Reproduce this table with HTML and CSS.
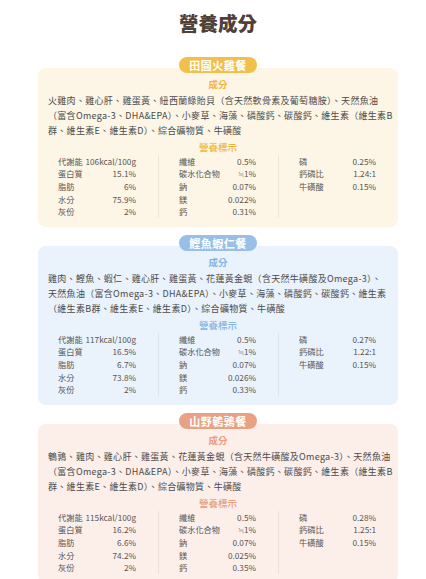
FILE: index.html
```html
<!DOCTYPE html>
<html lang="zh-Hant">
<head>
  <meta charset="UTF-8">
  <meta name="viewport" content="width=device-width, initial-scale=1.0">
  <title>營養成分</title>
  <link rel="stylesheet" href="styles.css">
</head>
<body>
  <main class="page">
    <h1 class="title">營養成分</h1>

    <section class="recipe turkey">
      <div class="badge">田園火雞餐</div>
      <div class="card">
        <h3 class="card-head">成分</h3>
        <p class="ingredients">火雞肉、雞心肝、雞蛋黃、紐西蘭綠貽貝（含天然軟骨素及葡萄糖胺）、天然魚油<br>（富含Omega-3、DHA&amp;EPA）、小麥草、海藻、磷酸鈣、碳酸鈣、維生素（維生素B<br>群、維生素E、維生素D）、綜合礦物質、牛磺酸</p>
        <h3 class="card-head sub">營養標示</h3>
        <div class="facts">
          <div class="facts-col">
            <div class="fact"><span>代謝能</span><span>106kcal/100g</span></div>
            <div class="fact"><span>蛋白質</span><span>15.1%</span></div>
            <div class="fact"><span>脂肪</span><span>6%</span></div>
            <div class="fact"><span>水分</span><span>75.9%</span></div>
            <div class="fact"><span>灰份</span><span>2%</span></div>
          </div>
          <div class="facts-col">
            <div class="fact"><span>纖維</span><span>0.5%</span></div>
            <div class="fact"><span>碳水化合物</span><span>≒1%</span></div>
            <div class="fact"><span>鈉</span><span>0.07%</span></div>
            <div class="fact"><span>鎂</span><span>0.022%</span></div>
            <div class="fact"><span>鈣</span><span>0.31%</span></div>
          </div>
          <div class="facts-col">
            <div class="fact"><span>磷</span><span>0.25%</span></div>
            <div class="fact"><span>鈣磷比</span><span>1.24:1</span></div>
            <div class="fact"><span>牛磺酸</span><span>0.15%</span></div>
          </div>
        </div>
      </div>
    </section>

    <section class="recipe bonito">
      <div class="badge">鰹魚蝦仁餐</div>
      <div class="card">
        <h3 class="card-head">成分</h3>
        <p class="ingredients">雞肉、鰹魚、蝦仁、雞心肝、雞蛋黃、花蓮黃金蜆（含天然牛磺酸及Omega-3）、<br>天然魚油（富含Omega-3、DHA&amp;EPA）、小麥草、海藻、磷酸鈣、碳酸鈣、維生素<br>（維生素B群、維生素E、維生素D）、綜合礦物質、牛磺酸</p>
        <h3 class="card-head sub">營養標示</h3>
        <div class="facts">
          <div class="facts-col">
            <div class="fact"><span>代謝能</span><span>117kcal/100g</span></div>
            <div class="fact"><span>蛋白質</span><span>16.5%</span></div>
            <div class="fact"><span>脂肪</span><span>6.7%</span></div>
            <div class="fact"><span>水分</span><span>73.8%</span></div>
            <div class="fact"><span>灰份</span><span>2%</span></div>
          </div>
          <div class="facts-col">
            <div class="fact"><span>纖維</span><span>0.5%</span></div>
            <div class="fact"><span>碳水化合物</span><span>≒1%</span></div>
            <div class="fact"><span>鈉</span><span>0.07%</span></div>
            <div class="fact"><span>鎂</span><span>0.026%</span></div>
            <div class="fact"><span>鈣</span><span>0.33%</span></div>
          </div>
          <div class="facts-col">
            <div class="fact"><span>磷</span><span>0.27%</span></div>
            <div class="fact"><span>鈣磷比</span><span>1.22:1</span></div>
            <div class="fact"><span>牛磺酸</span><span>0.15%</span></div>
          </div>
        </div>
      </div>
    </section>

    <section class="recipe quail">
      <div class="badge">山野鵪鶉餐</div>
      <div class="card">
        <h3 class="card-head">成分</h3>
        <p class="ingredients">鵪鶉、雞肉、雞心肝、雞蛋黃、花蓮黃金蜆（含天然牛磺酸及Omega-3）、天然魚油<br>（富含Omega-3、DHA&amp;EPA）、小麥草、海藻、磷酸鈣、碳酸鈣、維生素（維生素B<br>群、維生素E、維生素D）、綜合礦物質、牛磺酸</p>
        <h3 class="card-head sub">營養標示</h3>
        <div class="facts">
          <div class="facts-col">
            <div class="fact"><span>代謝能</span><span>115kcal/100g</span></div>
            <div class="fact"><span>蛋白質</span><span>16.2%</span></div>
            <div class="fact"><span>脂肪</span><span>6.6%</span></div>
            <div class="fact"><span>水分</span><span>74.2%</span></div>
            <div class="fact"><span>灰份</span><span>2%</span></div>
          </div>
          <div class="facts-col">
            <div class="fact"><span>纖維</span><span>0.5%</span></div>
            <div class="fact"><span>碳水化合物</span><span>≒1%</span></div>
            <div class="fact"><span>鈉</span><span>0.07%</span></div>
            <div class="fact"><span>鎂</span><span>0.025%</span></div>
            <div class="fact"><span>鈣</span><span>0.35%</span></div>
          </div>
          <div class="facts-col">
            <div class="fact"><span>磷</span><span>0.28%</span></div>
            <div class="fact"><span>鈣磷比</span><span>1.25:1</span></div>
            <div class="fact"><span>牛磺酸</span><span>0.15%</span></div>
          </div>
        </div>
      </div>
    </section>
  </main>
</body>
</html>
```

FILE: styles.css
```css
* {
  box-sizing: border-box;
}

body {
  margin: 0;
  background: #fff;
  font-family: "Noto Sans CJK TC", "Noto Sans", sans-serif;
  color: #4a4a4a;
}

.page {
  padding: 10px 28px 0 38px;
}

.title {
  margin: 0 0 21px;
  font-size: 19.5px;
  line-height: 26px;
  font-weight: 900;
  text-align: center;
  color: #4f4038;
}

.recipe {
  display: flex;
  flex-direction: column;
  align-items: center;
  margin-bottom: 8px;
}

.badge {
  position: relative;
  z-index: 1;
  height: 16px;
  line-height: 16px;
  padding: 0 10px;
  border-radius: 8px;
  color: #fff;
  font-size: 11px;
  font-weight: 700;
  letter-spacing: 0.5px;
}

.card {
  align-self: stretch;
  margin-top: -5px;
  padding: 10px 0 9px;
  border-radius: 8px;
}

.card-head {
  margin: 0;
  font-size: 9.5px;
  line-height: 12px;
  font-weight: 700;
  text-align: center;
}

.card-head.sub {
  margin-top: 3px;
  line-height: 13px;
  font-weight: 500;
}

.ingredients {
  margin: 2.5px 0 0;
  padding: 0 0 0 10px;
  font-size: 9px;
  line-height: 15px;
  letter-spacing: 0.3px;
  white-space: nowrap;
  color: #4a4a4a;
}

.facts {
  display: grid;
  grid-template-columns: repeat(3, 1fr);
  margin-top: 1px;
}

.facts-col {
  padding: 0 22px 0 20px;
}

.facts-col + .facts-col {
  border-left: 1px solid rgba(0, 0, 0, 0.06);
}

.fact {
  display: flex;
  justify-content: space-between;
  white-space: nowrap;
  font-size: 8.2px;
  line-height: 12.7px;
  color: #555;
}

/* colour themes */
.turkey .badge { background: #f3bf4b; }
.turkey .card { background: #fdf6e6; }
.turkey .card-head { color: #f1b53d; }

.bonito .badge { background: #97bfe8; }
.bonito .card { background: #eaf2fc; }
.bonito .card-head { color: #86b4e2; }

.quail .badge { background: #e9a183; }
.quail .card { background: #fcefea; }
.quail .card-head { color: #e99c7c; }
```
